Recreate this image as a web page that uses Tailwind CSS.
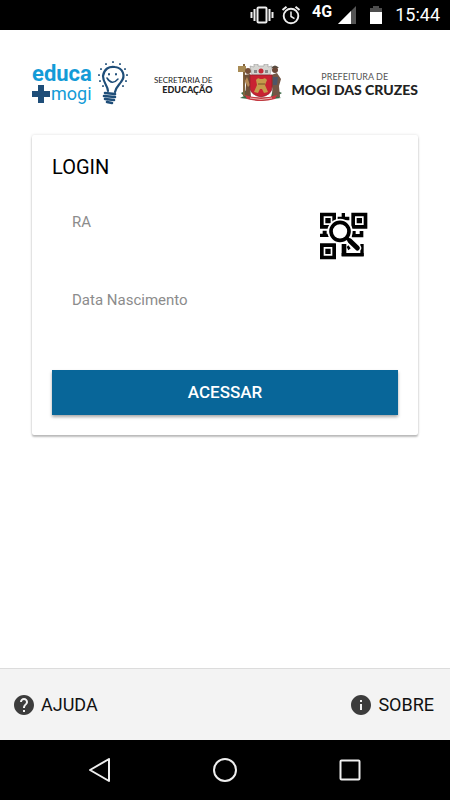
<!DOCTYPE html>
<html lang="pt-BR">
<head>
<meta charset="utf-8">
<meta name="viewport" content="width=device-width, initial-scale=1">
<title>Educa+Mogi</title>
<script src="https://cdn.jsdelivr.net/npm/@tailwindcss/browser@4"></script>
</head>
<body class="flex min-h-screen flex-col bg-white font-[Roboto,sans-serif] text-black">

<!-- Status bar -->
<div class="flex h-[30px] items-center justify-end bg-black pr-[10px] text-white">
  <svg class="mr-[7px] h-[20px] w-[24px]" viewBox="0 0 24 20" fill="none" stroke="#eee" aria-hidden="true">
    <rect x="7.500" y="2.500" width="9" height="15" rx="1" stroke-width="2"/>
    <path d="M4.500 4v12M19.500 4v12" stroke-width="2"/><path d="M1.500 7v6M22.500 7v6" stroke-width="2"/>
  </svg>
  <svg class="mr-[11px] h-[20px] w-[20px]" viewBox="0 0 20 20" fill="none" stroke="#eee" aria-hidden="true">
    <circle cx="10" cy="11" r="7.300" stroke-width="1.900"/>
    <path d="M10 6.500v5l3.500 2.200" stroke-width="1.500"/>
    <path d="M1.500 5l4-3.300M18.500 5l-4-3.300" stroke-width="2"/>
  </svg>
  <span class="mr-[6px] pb-[6px] text-[16px] leading-[20px] font-bold">4G</span>
  <svg class="mr-[14px] h-[20px] w-[18px]" viewBox="0 0 18 20" aria-hidden="true">
    <path d="M18 1v18H0z" fill="#555"/><path d="M13 6v13H0z" fill="#fff"/>
  </svg>
  <svg class="mr-[13px] h-[20px] w-[12px]" viewBox="0 0 12 20" aria-hidden="true">
    <path d="M0 3h3V1h6v2h3v5H0z" fill="#4d4d4d"/><path d="M0 7h12v12H0z" fill="#fff"/>
  </svg>
  <span class="text-[18px] leading-[20px]">15:44</span>
</div>

<!-- Brand logos -->
<header class="flex h-[105px] items-center justify-between px-8">
  <div class="flex items-center gap-[5px]">
    <div class="pt-[2px] text-[#139bd7]">
      <div class="text-[22px] leading-[20px] font-bold">educa</div>
      <div class="flex items-center gap-[1px]">
        <svg class="h-[18px] w-[18px]" viewBox="0 0 18 18" aria-hidden="true"><path d="M6 0h6v6h6v6h-6v6H6v-6H0V6h6z" fill="#1f4e79"/></svg>
        <span class="text-[18px] leading-[20px]">mogi</span>
      </div>
    </div>
    <svg class="h-[44px] w-[32px]" viewBox="0 0 32 44" fill="none" stroke="#1f4e79" stroke-linecap="round" aria-hidden="true">
      <path d="M11 30C11 25 6 22 6 15C7 8 12 5 18 6C26 7 29 15 24 21C22 24 19 26 18 31" stroke-width="2.200"/>
      <path d="M8 32l10 1M7 35l11 1M8 38l9 1M10 41l5 1" stroke-width="2.600"/>
      <path d="M10 17q5 8 11 1" stroke-width="1.500"/>
      <path d="M12 13v.5M19 13v.5" stroke-width="2"/>
      <path d="M16 1v.2M9 3v.2M23 3v.2M4 8v.2M28 8v.2M2 14v.2M30 14v.2M3 20v.2M29 20v.2M6 25v.2M26 25v.2" stroke-width="1.800"/>
    </svg>
  </div>
  <div class="pt-[5px] text-right font-[Lato,sans-serif] text-[9px] leading-[10px] text-[#222]">
    <div class="text-[8px]">SECRETARIA DE</div>
    <div class="font-black">EDUCAÇÃO</div>
  </div>
  <div class="flex items-center gap-[8px]">
    <svg class="h-[38px] w-[46px]" viewBox="0 0 46 38" aria-hidden="true">
      <path d="M3 29l8-4 1 8 10 1 11-1 2-8 9 4-5 3 4 2-8 1-12 2-13-2-8-1 4-2z" fill="#3c6a45"/>
      <path d="M5 0h2v32H5z" fill="#81633e"/><path d="M0 2h8v6H0z" fill="#a88b55"/>
      <circle cx="10" cy="7" r="3" fill="#765039"/><path d="M6 11l6-1 3 5-3 6 1 12H7l1-12z" fill="#6e5038"/>
      <path d="M9 13l3 8-2 2-3-6z" fill="#b68b57"/>
      <circle cx="37" cy="6" r="3" fill="#6b4737"/><path d="M33 4q4-5 8 0z" fill="#594b3f"/>
      <path d="M33 11l6-2 4 6-2 7 1 11h-7l-1-11-2-5z" fill="#735746"/><path d="M35 13h5l-1 8h-4z" fill="#4e5568"/>
      <path d="M12 2l4 1V0h4v2h6V0h4v3l4-1-2 9H14z" fill="#d5d5d1" stroke="#999" stroke-width=".6"/>
      <path d="M16 6h3v3h-3zM27 6h3v3h-3z" fill="#888"/><circle cx="23" cy="7" r="2.500" fill="#c52936"/>
      <path d="M12 11h22v12q0 8-11 10q-11-2-11-10z" fill="#c92232" stroke="#8d1d29" stroke-width=".7"/>
      <path d="M18 16q2-3 4-1h3q2-2 4 1l-2 5 3 7-4 1-2-4h-2l-2 4-4-1 3-7z" fill="#c69b4b"/>
      <path d="M20 20h7" stroke="#755425"/>
      <path d="M7 31q16 5 32 0l-2 4q-14 4-28 0z" fill="#c83740"/><path d="M12 34q11 3 22 0" fill="none" stroke="#e7b4b0"/>
    </svg>
    <div class="pt-px text-center font-[Lato,sans-serif] text-[#222]">
      <div class="text-[9px] leading-[12px] text-[#555]">PREFEITURA DE</div>
      <div class="text-[14px] leading-[13px] font-black whitespace-nowrap">MOGI DAS CRUZES</div>
    </div>
  </div>
</header>

<main class="flex-1 px-8">
  <form class="rounded-[2px] bg-white p-5 shadow-[0_2px_2px_rgba(0,0,0,0.24),0_0_3px_rgba(0,0,0,0.14)]">
    <h1 class="text-[20px] leading-[24px]">LOGIN</h1>
    <div class="mt-[33px] flex items-start justify-between pr-[30px] pl-5">
      <div class="flex-1">
        <label for="ra" class="block text-[15px] leading-[20px] text-[#8c8c8c]">RA</label>
        <input id="ra" type="text" inputmode="numeric" class="block h-[30px] w-full bg-transparent text-[15px] outline-none">
      </div>
      <button type="button" aria-label="Ler código QR" class="block">
        <svg class="h-[48px] w-[48px]" viewBox="30 23 144 144" aria-hidden="true">
          <path fill-rule="evenodd" d="M30 25h48v48H30zM41 36v26h26V36zM124 25h48v48h-48zM135 36v26h26V36zM30 117h48v48H30zM41 128v26h26v-26z"/>
          <path d="M46 41h16v16H46zM140 41h16v16h-16zM46 133h16v16H46z"/>
          <path d="M95 26h10v11h13v11H83V37h12zM30 88h8v-9h12v9h8v10H30zM125 80h12v9h12v-9h11v19h-35zM95 119h14v27h42v-27h10v37H95z"/>
          <path d="M111 102l31 29" stroke="#fff" stroke-width="23" stroke-linecap="round"/>
          <circle cx="90" cy="81" r="30" fill="#fff" stroke="#fff" stroke-width="16"/>
          <circle cx="90" cy="81" r="27" fill="#fff" stroke="#000" stroke-width="11"/>
          <path d="M95 146h66v10H95z"/><path d="M110 128l5-5 7 9-7 6z"/>
          <path d="M108 99l13 12" stroke="#000" stroke-width="10"/><path d="M120 110l22 21" stroke="#000" stroke-width="15" stroke-linecap="round"/>
        </svg>
      </button>
    </div>
    <div class="mt-[28px] px-5">
      <label for="nascimento" class="block text-[15px] leading-[20px] text-[#8c8c8c]">Data Nascimento</label>
      <input id="nascimento" type="text" class="block h-[30px] w-full bg-transparent text-[15px] outline-none">
    </div>
    <button type="submit" class="mt-[30px] block h-[45px] w-full bg-[#086699] pb-[2px] text-[17px] leading-[20px] font-medium text-white shadow-[0_2px_3px_rgba(0,0,0,0.35)]">ACESSAR</button>
  </form>
</main>

<footer class="flex h-[72px] items-center justify-between border-t border-[#dcdcdc] bg-[#f3f3f3] pr-4 pl-[14px] text-[18px] leading-[20px] text-[#111]">
  <a href="#ajuda" class="flex items-center gap-[7px]">
    <svg class="h-[20px] w-[20px]" viewBox="2 2 20 20" fill="#3c3c3c" aria-hidden="true"><path d="M12 2C6.480 2 2 6.480 2 12s4.480 10 10 10 10-4.480 10-10S17.520 2 12 2zm1 17h-2v-2h2v2zm2.070-7.750l-.9.920C13.450 12.900 13 13.500 13 15h-2v-.5c0-1.100.450-2.100 1.170-2.830l1.240-1.260c.370-.360.590-.860.590-1.410 0-1.100-.9-2-2-2s-2 .9-2 2H8c0-2.210 1.790-4 4-4s4 1.790 4 4c0 .880-.360 1.680-.930 2.250z"/></svg>
    AJUDA
  </a>
  <a href="#sobre" class="flex items-center gap-[7px]">
    <svg class="h-[20px] w-[20px]" viewBox="2 2 20 20" fill="#3c3c3c" aria-hidden="true"><path d="M12 2C6.480 2 2 6.480 2 12s4.480 10 10 10 10-4.480 10-10S17.520 2 12 2zm1 15h-2v-6h2v6zm0-8h-2V7h2v2z"/></svg>
    SOBRE
  </a>
</footer>

<!-- System navigation -->
<nav class="flex h-[60px] items-center justify-center gap-[101px] bg-black" aria-label="Sistema">
  <button type="button" aria-label="Voltar"><svg class="h-[24px] w-[24px]" viewBox="0 0 24 24" fill="none" stroke="#eee" stroke-width="2" stroke-linejoin="round"><path d="M21 1v22L2 12z"/></svg></button>
  <button type="button" aria-label="Início"><svg class="h-[24px] w-[24px]" viewBox="0 0 24 24" fill="none" stroke="#eee" stroke-width="2"><circle cx="12" cy="12" r="11"/></svg></button>
  <button type="button" aria-label="Recentes"><svg class="h-[24px] w-[24px]" viewBox="0 0 24 24" fill="none" stroke="#eee" stroke-width="2"><rect x="2.500" y="2.500" width="19" height="19" rx="1"/></svg></button>
</nav>
</body>
</html>
